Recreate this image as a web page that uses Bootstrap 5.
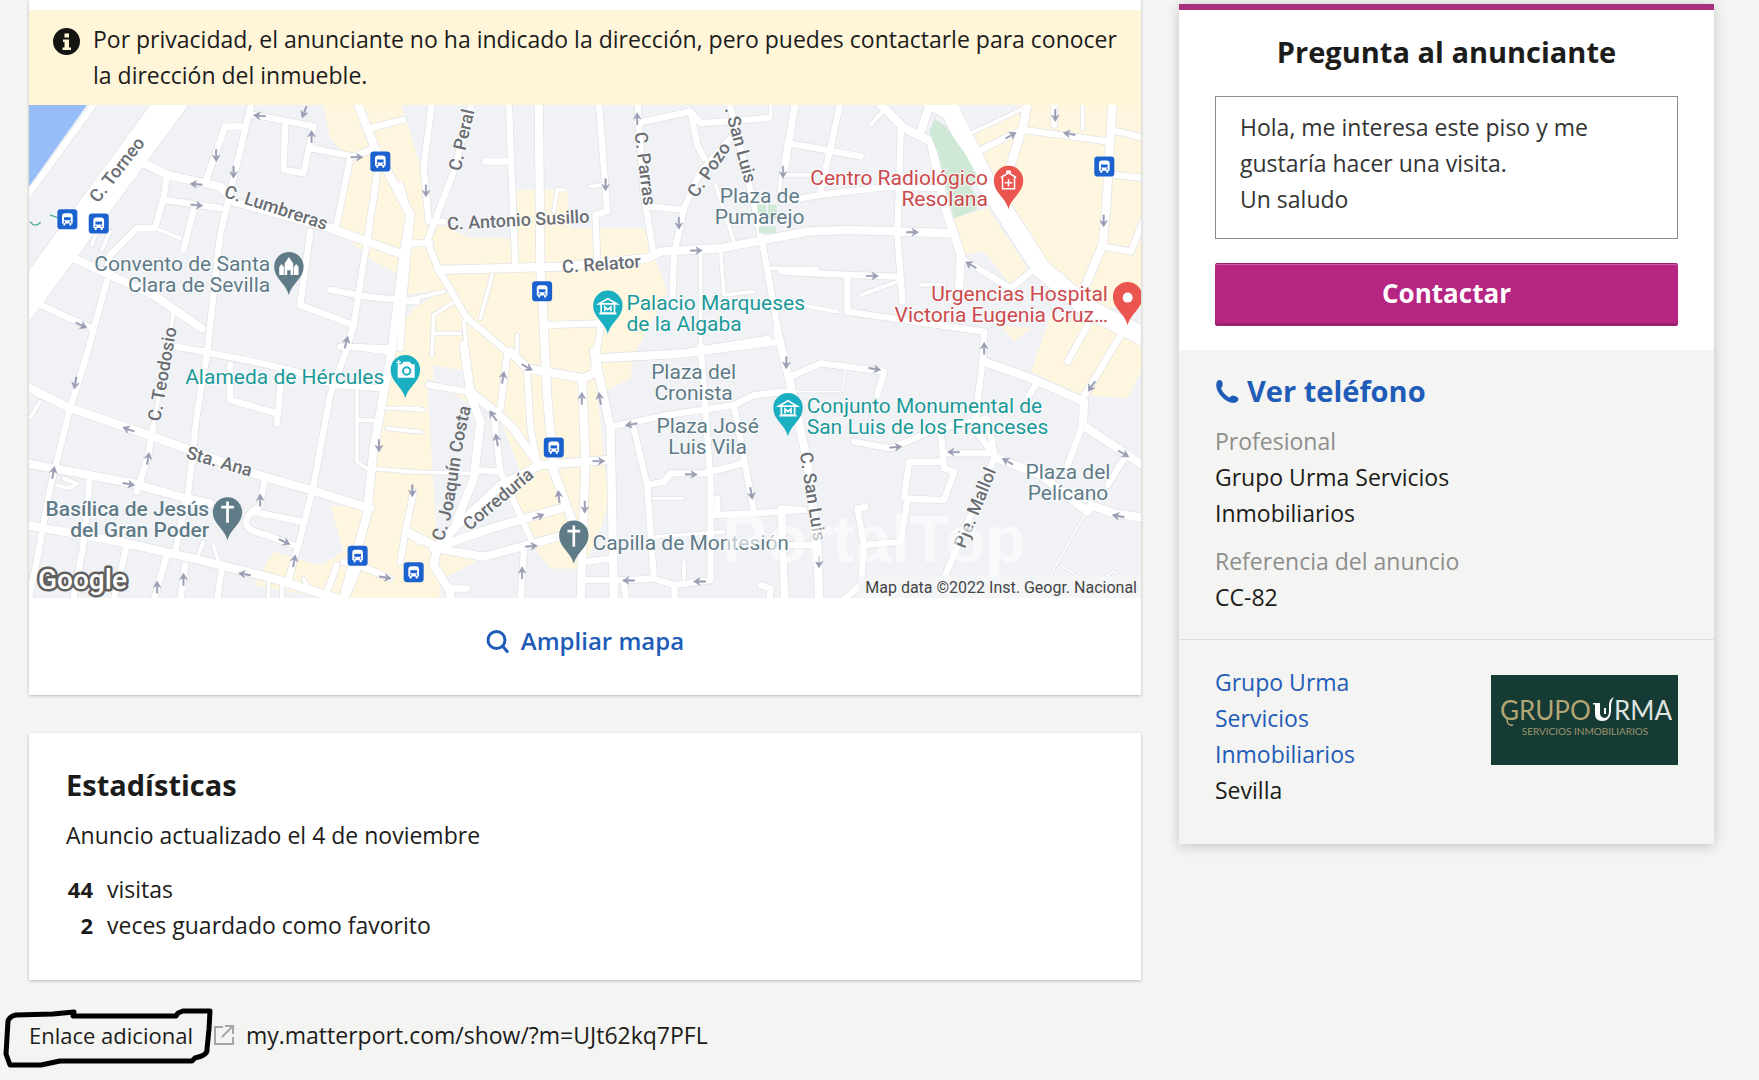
<!DOCTYPE html>
<html lang="es">
<head>
<meta charset="utf-8">
<meta name="viewport" content="width=device-width, initial-scale=1">
<title>Anuncio de piso en Sevilla</title>
<link rel="stylesheet" href="https://cdn.jsdelivr.net/npm/bootstrap@5.3.0/dist/css/bootstrap.min.css">
<style>
:root{--ink:#1c1c1a;--brand:#b72583;--azul:#1f5cb8;--page:#f4f4f2}
body{background:var(--page);color:var(--ink);font-family:"Open Sans","Noto Sans",sans-serif;font-size:23px;line-height:36px}
a{color:var(--azul);text-decoration:none}
.page-wrap{padding:0 45px 24px 29px}
.page-cols{gap:38px}
.main-col{flex:1 1 0;min-width:0}
.side-col{flex:0 1 535px}
.panel{background:#fff;box-shadow:0 1px 3px rgba(0,0,0,.25)}
.map-panel{padding-top:10px}
.notice{background:#fff6da;padding:11px 24px 12px;gap:13px}
.notice svg{flex:none;margin-top:7px}
.map-view{display:block;width:100%;height:493px}
.map-link{padding:25px 0 36px;font-size:24px;font-weight:600;gap:11px}
.stats{margin-top:38px;padding:34px 37px 37px}
.panel-title{font-size:29px;line-height:36px;font-weight:700;margin:0}
.stats p{margin:14px 0 18px}
.stat-num{width:27px;text-align:right;font-weight:700;font-size:22px}
.stats li{gap:14px}
.extra{margin-top:37px;gap:11px}
.extra-tag{margin-right:9px;font-size:22px}
.marker{left:-24px;top:-8px;width:208px;height:60px;overflow:visible;pointer-events:none}
.contact-box{margin-top:4px;box-shadow:0 2px 12px rgba(0,0,0,.2);background:var(--page)}
.ask{background:#fff;border-top:6px solid #a8307e;padding:24px 36px}
.ask textarea{height:143px;margin:26px 0 24px;padding:12px 24px;border:1px solid #8c8c8c;border-radius:0;font-size:23px;line-height:36px;color:#333;resize:none}
.btn-ask{height:63px;background:var(--brand);color:#fff;font-size:26px;font-weight:700;line-height:36px;border:0;border-radius:3px;padding:6px 8px 10px;box-shadow:inset 0 1px 0 #97206c,inset 0 2px 0 #cf5ba6,inset 0 -3px 0 #9c1f70}
.btn-ask:hover{background:#a31f74;color:#fff}
.who{padding:23px 36px 24px}
.phone{font-size:29px;font-weight:700;gap:8px}
.who dl{margin:14px 0 0}
.who dt{font-weight:400;color:#8e8e8c}
.who dd{margin:0 0 12px;max-width:260px}
.who dd:last-child{margin:0}
.agency{border-top:1px solid #dcdcda;padding:24px 36px 36px}
.agency-name{max-width:170px}
.agency svg{margin-top:11px}
/* map */
#net path{fill:none;stroke-linecap:round;stroke-linejoin:round}
.wa{stroke-width:calc(92px + var(--edge))}
.wv{stroke-width:calc(56px + var(--edge))}
.wb{stroke-width:calc(25px + var(--edge))}
.wc{stroke-width:calc(19px + var(--edge))}
.wd{stroke-width:calc(11px + var(--edge))}
.we{stroke-width:calc(5px + var(--edge))}
.road-case{--edge:4px;stroke:#dfe1e5}
.road-fill{--edge:0px;stroke:#fff}
.mlab{font-family:Roboto,sans-serif;font-size:21px}
.street{font-family:Roboto,sans-serif;font-size:18px;font-weight:500;fill:#6a6e73}
.curved{font:500 54px Roboto,sans-serif;fill:#6a6e73}
.slate{fill:#607b88}.teal{fill:#1b9999}.red{fill:#cb4a4c}
.mlab text,.street text{paint-order:stroke;stroke:#fff;stroke-opacity:.75;stroke-width:2px}
.attrib{font-family:Roboto,sans-serif;font-size:16px;fill:#454545}
.glogo{font-family:Roboto,sans-serif;font-size:28px;font-weight:500;fill:#fff;stroke:#606060;stroke-width:5px;paint-order:stroke;stroke-linejoin:round}
.wmark{font-family:"Liberation Sans",sans-serif;font-size:66px;font-weight:700;fill:#fff;opacity:.6}
@media (max-width:991px){.side-col{flex-basis:auto}}
</style>
</head>
<body>
<div class="page-wrap">
<div class="page-cols d-flex flex-column flex-lg-row align-items-start">
<main class="main-col">
<section class="panel map-panel">
 <div class="notice d-flex align-items-start">
  <svg width="27" height="27" viewBox="0 0 27 27" aria-hidden="true"><circle cx="13.500" cy="13.500" r="13.500" fill="#141412"/><path d="M11.500 5.500h4.500v4h-4.500zM10 11.500h6v8h2v2.500H9.500v-2.500h2v-5.500H10z" fill="#fff5d5"/></svg>
  <div>Por privacidad, el anunciante no ha indicado la dirección, pero puedes contactarle para conocer la dirección del inmueble.</div>
 </div>
 <svg class="map-view" viewBox="0 0 1111 493" preserveAspectRatio="xMidYMid slice" role="img" aria-label="Mapa de la zona">
 <defs>
  <path id="pin" d="M0 86C-8 50-44 38-44 0A44 44 0 1 1 44 0C44 38 8 50 0 86Z"/>
  <g id="bus"><rect x="-30" y="-30" width="60" height="60" rx="10" fill="#1c62cf"/><path d="M-16-9q0-9 9-9H7q9 0 9 9V13h-4v6H6v-6H-6v6h-6v-6h-4z" fill="#fff"/><path d="M-10-6H10V3H-10z" fill="#1c62cf"/><circle cx="-9" cy="8" r="2.500" fill="#1c62cf"/><circle cx="9" cy="8" r="2.500" fill="#1c62cf"/></g>
  <path id="arr" d="M-2-18H2V4L11-1 0 18-11-1-2 4Z" fill="#9a9db3" stroke="#9a9db3" stroke-width="2"/>
  <g id="museum" fill="none" stroke="#fff" stroke-width="5"><path d="M-27-7L0-23 27-7ZM-20-5V20H20V-5M-26 22H26M-9 15V2L0 10 9 2V15"/></g>
  <path id="cross" d="M0-29V35M-19-12H19" stroke="#fff" stroke-width="8" fill="none"/>
  <g id="net">
   <g>
    <path class="wa" d="M470 0L250 300L0 640"/>
    <path class="wc" d="M235 10L20 305"/>
    <path class="wc" d="M695 20L640 250L600 420L560 780L530 960L500 1230"/>
    <path class="wc" d="M560 250L615 95L660 95M700 60L880 95L850 235L790 225L795 90M870 160L1000 185L1050 165M990 190L945 410"/>
    <path class="wb" d="M380 210L440 240L600 275L640 320L930 400L1150 480"/>
    <path class="wc" d="M440 250L430 310L405 400L350 400L270 480L260 520M430 315L600 340M525 330L490 465"/>
    <path class="wd" d="M405 400L480 430M235 400L215 450M270 410L245 465"/>
    <path class="wb" d="M160 490L400 600L545 700M1010 20L1060 150L1170 360L1150 480L1130 640L1115 760L1060 1060L1040 1260L1000 1400L960 1540"/>
    <path class="wc" d="M40 620L215 700M260 560L200 780L150 940L90 1180L50 1400L25 1520M870 410L840 630L1000 690L980 760L930 900L880 1170L840 1330L800 1470"/>
    <path class="wc" d="M1050 100L1150 75M1070 240L1040 440L1000 690M930 585L1040 605L1190 620"/>
    <path class="wd" d="M460 650L450 720L395 1020M465 760L560 765M975 755L1110 775"/>
   </g>
   <g transform="translate(0 750)">
    <path class="wb" d="M20 125L140 185L400 275L700 385L870 435L1050 490M20 355L340 415L480 455L570 475M20 540L300 590L520 640L760 700L950 760"/>
    <path class="wc" d="M470 5L700 50L830 80L940 120L1090 130M630 60L630 165L770 205M785 80L770 235M400 240L385 330L350 440M735 395L720 480L700 500L850 530M700 495Q640 550 740 570L820 600M210 390L190 600L160 760M500 460L465 620M440 630L400 770M320 600L280 770M495 660L480 770M605 670L590 770M960 5L1120 10"/>
    <path class="wd" d="M130 400L170 415L150 430L110 420M550 590L530 640M580 600L595 650M1010 140L1010 350L1040 370L1190 380M1010 225L1060 225M1100 190L1200 190M1100 250L1200 260M60 170L30 220M745 705V770M785 715V770M850 700L870 740"/>
    <path class="wc" d="M970 650L1040 670L1110 700M950 660L920 740M1180 440L1155 560L1200 590M1155 560L1140 650M1010 680L970 770"/>
   </g>
   <g transform="translate(1140 0)">
    <path class="wc" d="M95 20L70 220L85 380L130 380M215 20L160 230L80 440L115 525L200 670L320 770M255 200H325M325 20L345 520M595 20L620 350L585 360L590 490M710 20L730 300L760 480"/>
    <path class="wb" d="M415 20L420 530L425 600L440 900L460 1130L520 1290"/>
    <path class="wb" d="M115 525L480 515L740 490L780 470L960 460L1220 410L1340 405L1650 415"/>
    <path class="wc" d="M0 270L30 380L10 600L0 760M30 445H90M710 85L870 50L900 85L980 80L1100 70M870 50L890 150L910 190M990 130L900 230L850 340L820 480L815 620M750 335L850 345M985 20L1060 330L1090 470L1140 750"/>
    <path class="wd" d="M1180 20L1150 190L1135 290M1160 145L1200 155M1140 240H1240M275 540L240 670M0 620L130 590M155 625L100 660L95 780M105 715H180M190 680L200 770M350 720V770M900 470V760M960 470L970 600L1060 590M945 270L1000 440M1110 20V70M1100 520H1250M570 275L600 270M460 350L470 285L490 285"/>
    <path class="wc" d="M440 690L600 685M600 700L580 820M590 790L820 780L1140 740"/>
   </g>
   <g transform="translate(2280 0)">
    <path class="wv" d="M440 10L510 50L620 270L780 520L920 640L1100 730"/>
    <path class="wb" d="M300 30L370 100L450 140L490 330L540 480L535 580M440 50L420 110M740 20L730 80L690 210M995 20L975 350L965 450L915 570"/>
    <path class="wc" d="M45 20L10 240M180 20L120 290M0 320L120 300L330 275L480 280M360 100L350 420L365 620M20 145L240 185M1 530L200 540L350 545M200 545V650L400 680L610 710M600 165L725 105L980 140M820 30V90M1010 110L1090 130M1000 240L1090 250M970 455L1050 470L1090 370M540 490L690 580L750 530M610 710L605 800L580 1000L640 1080M920 690L860 800M1020 720L900 920"/>
    <path class="wd" d="M270 90L310 45M560 120L720 45M905 30V100M0 620L170 650M240 600L350 560M420 570H490M530 20V60"/>
   </g>
   <g transform="translate(1140 750)">
    <path class="wb" d="M190 0L210 140L260 180L330 240L410 350M210 150L240 230L220 400L160 550L110 610L250 635L380 600L490 570M100 610L270 550L480 490M20 560L100 600M110 610L100 660L150 740L150 780M120 590L300 420L420 360L620 345"/>
    <path class="wb" d="M330 20L380 70L550 100L590 80L590 40L850 25L1100 -15M580 20L630 250L635 500L640 770M545 100L555 350L540 780"/>
    <path class="wc" d="M85 120L200 140M380 80L390 250L410 350M320 30L300 190L280 210L300 380L400 600M230 375L300 380M370 620L360 770M630 245L800 210L1000 180L1060 150L1160 140M700 250L740 420L760 700L820 720L930 705V410L900 0M740 420L790 410L810 385L910 385L1030 355M1000 180L1060 500M930 510L1060 505L1200 495M950 460V500M540 705H690L750 700M670 710L680 780M820 720L825 780M1140 510L1155 770M555 650L630 640M150 730H200M1080 720L1110 730L1105 770"/>
    <path class="wd" d="M760 460H845M760 575L970 560M850 650V700M0 190L70 195M0 255L60 260M0 380L220 385"/>
   </g>
   <g transform="translate(2280 750)">
    <path class="wb" d="M-10 -40L30 120L80 350L110 600L115 770M610 50L750 100L910 170L905 240L1100 370M650 340L780 390L920 500L930 480L1000 505L1100 520"/>
    <path class="wc" d="M30 95L120 55L310 80L290 150M220 290L330 310L470 250L620 220L640 325L490 325M480 270L490 370L520 380L490 465L370 460L385 350L490 350M380 465L360 590L250 600L230 490L255 485M250 600L240 720L180 770M0 490L70 495M0 600L100 600M5 490L10 770M640 340L490 700M770 110L740 160M905 240L860 360M1030 340L980 420"/>
    <path class="we" d="M195 70L185 140H40M910 510L810 690M840 660L900 700M960 700L1000 680L1040 710"/>
   </g>
  </g>
  <path id="jc" d="M128 590Q158 510 172 400T212 185"/>
 </defs>
 <g transform="translate(-9 -10) scale(.33333)">
  <rect x="20" y="20" width="3360" height="1500" fill="#f0f2f5"/>
  <path fill="#97bdf9" d="M20 20H208L20 285Z"/>
  <g fill="#fef6de">
   <path d="M905 20H1140L1205 230 1225 370 1350 430H1480V285H1640L1650 400 1870 400 1940 590 1840 780 1830 850 1730 900 1765 1220 1740 1300 1690 1420 1590 1420 1520 1330 1430 1130 1340 920 1220 850 1250 1350 1400 1380 1270 1450 1250 1520H980L700 1470 760 1370 900 1410 970 1370 930 1230 1050 1240 1110 760 1140 540 1060 500 945 400 985 190 930 130Z"/>
   <path d="M2840 130L3020 20H3380V640L3180 640 3060 500ZM2800 370L2900 340 3020 520 2970 570 2890 470 2820 480ZM3090 660L3360 720V830L3320 910 3180 900 3030 830ZM2940 690L3030 700 2980 740Z"/>
  </g>
  <path fill="#f0f2f5" d="M1140 600L1270 585 1180 640 1140 690ZM1240 810L1345 830V890H1235ZM1370 930L1440 970 1500 1130 1420 1330 1340 1330Z"/>
  <g><use href="#net" class="road-case"/><use href="#net" class="road-fill"/></g>
  <path fill="#cfe9d6" d="M2725 110L2742 72 2775 95 2835 180 2870 245 2850 280 2870 310 2868 345 2800 370 2780 290 2756 190ZM2210 330h26v26h-26zM2242 330h26v40h-26zM2215 395h50v20h-50z"/>
  <path d="M30 380q15 20 32 2M90 360l22 8" fill="none" stroke="#4fae92" stroke-width="4"/>
  <g>
   <use href="#arr" transform="translate(588 182)"/><use href="#arr" transform="translate(640 232)"/><use href="#arr" transform="translate(852 52) rotate(20)"/><use href="#arr" transform="translate(718 63) rotate(95)"/><use href="#arr" transform="translate(874 125) rotate(180)"/><use href="#arr" transform="translate(1010 187) rotate(-90)"/><use href="#arr" transform="translate(528 268) rotate(95)"/><use href="#arr" transform="translate(530 331) rotate(-85)"/><use href="#arr" transform="translate(184 691) rotate(-65)"/><use href="#arr" transform="translate(978 742) rotate(195)"/>
   <use href="#arr" transform="translate(1217 288)"/><use href="#arr" transform="translate(1755 270)"/><use href="#arr" transform="translate(1850 72) rotate(180)"/><use href="#arr" transform="translate(1975 385)"/><use href="#arr" transform="translate(2027 467) rotate(-90)"/><use href="#arr" transform="translate(2287 232)"/>
   <use href="#arr" transform="translate(3103 62)"/><use href="#arr" transform="translate(3145 117) rotate(100)"/><use href="#arr" transform="translate(2970 122) rotate(-120)"/><use href="#arr" transform="translate(2675 412) rotate(-90)"/><use href="#arr" transform="translate(2555 543) rotate(-90)"/><use href="#arr" transform="translate(2850 510) rotate(120)"/><use href="#arr" transform="translate(3248 378)"/><use href="#arr" transform="translate(2890 760) rotate(180)"/>
   <use href="#arr" transform="translate(166 864) rotate(10)"/><use href="#arr" transform="translate(325 1003) rotate(110)"/><use href="#arr" transform="translate(384 1090) rotate(190)"/><use href="#arr" transform="translate(100 1132) rotate(190)"/><use href="#arr" transform="translate(326 1167) rotate(-80)"/><use href="#arr" transform="translate(720 1215) rotate(180)"/><use href="#arr" transform="translate(793 1340) rotate(-65)"/><use href="#arr" transform="translate(822 1397) rotate(190)"/><use href="#arr" transform="translate(673 1437) rotate(100)"/><use href="#arr" transform="translate(490 1452) rotate(180)"/><use href="#arr" transform="translate(411 1476) rotate(180)"/><use href="#arr" transform="translate(1076 1052)"/><use href="#arr" transform="translate(1176 1187)"/><use href="#arr" transform="translate(1095 1447) rotate(-80)"/>
   <use href="#arr" transform="translate(1520 817) rotate(-60)"/><use href="#arr" transform="translate(1448 847) rotate(190)"/><use href="#arr" transform="translate(1684 910) rotate(180)"/><use href="#arr" transform="translate(1738 910) rotate(170)"/><use href="#arr" transform="translate(1418 962) rotate(145)"/><use href="#arr" transform="translate(1429 1034) rotate(170)"/><use href="#arr" transform="translate(1735 1098) rotate(-90)"/><use href="#arr" transform="translate(1615 1204) rotate(175)"/><use href="#arr" transform="translate(1693 1236)"/><use href="#arr" transform="translate(1554 1264) rotate(-110)"/><use href="#arr" transform="translate(1533 1353) rotate(-95)"/><use href="#arr" transform="translate(1505 1433) rotate(180)"/><use href="#arr" transform="translate(1832 988) rotate(80)"/><use href="#arr" transform="translate(2012 1138) rotate(-90)"/><use href="#arr" transform="translate(2192 1195) rotate(-10)"/><use href="#arr" transform="translate(1824 1456) rotate(90)"/><use href="#arr" transform="translate(2037 1459) rotate(90)"/>
   <use href="#arr" transform="translate(2297 803)"/><use href="#arr" transform="translate(2562 822) rotate(-80)"/><use href="#arr" transform="translate(2625 1056) rotate(-95)"/><use href="#arr" transform="translate(2798 1071) rotate(90)"/><use href="#arr" transform="translate(2960 1099) rotate(120)"/><use href="#arr" transform="translate(3212 874) rotate(35)"/><use href="#arr" transform="translate(3308 1076) rotate(-60)"/><use href="#arr" transform="translate(3292 1263) rotate(100)"/><use href="#arr" transform="translate(2395 1400)"/>
  </g>
  <use href="#bus" x="142" y="373"/><use href="#bus" x="236" y="386"/><use href="#bus" x="1080" y="200"/><use href="#bus" x="1565" y="589"/><use href="#bus" x="3250" y="215"/><use href="#bus" x="1012" y="1382"/><use href="#bus" x="1180" y="1431"/><use href="#bus" x="1600" y="1057"/>
  <g fill="#607b88"><use href="#pin" x="806" y="515"/><use href="#pin" x="622" y="1250"/><use href="#pin" x="1660" y="1320"/></g>
  <g fill="#1ab0c2"><use href="#pin" x="1762" y="631"/><use href="#pin" x="1155" y="824"/><use href="#pin" x="2302" y="938"/></g>
  <g fill="#ea5550"><use href="#pin" x="2963" y="257"/><use href="#pin" x="3320" y="605"/></g>
  <path d="M777 540V516l7-9 7 9v24zM793 540V506l13-20 13 20v34h-8v-14h-10v14zM821 540V516l7-9 7 9v24z" fill="#fff"/>
  <use href="#cross" x="622" y="1248"/><use href="#cross" x="1660" y="1320"/>
  <use href="#museum" x="1762" y="634"/><use href="#museum" x="2302" y="940"/>
  <path d="M1132 808h12l6-8h18l6 8h9v40h-51z" fill="#fff"/><circle cx="1159" cy="828" r="11" fill="none" stroke="#1ab0c2" stroke-width="6"/><path d="M1135 795v14M1128 802h14" stroke="#fff" stroke-width="4"/>
  <path d="M2940 248L2963 234 2986 248M2945 247V282H2981V247M2963 253V275M2952 264H2974M2958 235V229H2968V235" fill="none" stroke="#fff" stroke-width="4.500"/>
  <circle cx="3320" cy="608" r="15" fill="#fff"/>
  <g transform="translate(1140 750)"><text class="curved"><textPath href="#jc">C. Joaquín Costa</textPath></text></g>
 </g>
 <g class="street">
  <text transform="translate(69 99) rotate(-52)">C. Torneo</text>
  <text transform="translate(194 92) rotate(18)">C. Lumbreras</text>
  <text transform="translate(131 317) rotate(-80)">C. Teodosio</text>
  <text transform="translate(431 67) rotate(-77)">C. Peral</text>
  <text transform="translate(418 125) rotate(-3)">C. Antonio Susillo</text>
  <text transform="translate(533 168) rotate(-4)">C. Relator</text>
  <text transform="translate(605 28) rotate(83)">C. Parras</text>
  <text transform="translate(667 94) rotate(-56)">C. Pozo</text>
  <text transform="translate(695 4) rotate(75)">. San Luis</text>
  <text transform="translate(156 353) rotate(16)">Sta. Ana</text>
  <text transform="translate(440 426) rotate(-40)">Correduría</text>
  <text transform="translate(770 348) rotate(81)">C. San Luis</text>
  <text transform="translate(935 444) rotate(-68)">Pje. Mallol</text>
 </g>
 <g class="mlab slate">
  <g text-anchor="end"><text x="241" y="166">Convento de Santa</text><text x="241" y="187">Clara de Sevilla</text>
  <text x="180" y="411" font-weight="500">Basílica de Jesús</text><text x="180" y="432" font-weight="500">del Gran Poder</text></g>
  <g text-anchor="middle"><text x="730" y="98">Plaza de</text><text x="730" y="119">Pumarejo</text>
  <text x="664" y="274">Plaza del</text><text x="664" y="295">Cronista</text>
  <text x="678" y="328">Plaza José</text><text x="678" y="349">Luis Vila</text>
  <text x="1038" y="374">Plaza del</text><text x="1038" y="395">Pelícano</text></g>
  <text x="563" y="445">Capilla de Montesión</text>
 </g>
 <g class="mlab teal">
  <text x="355" y="279" text-anchor="end">Alameda de Hércules</text>
  <text x="597" y="205">Palacio Marqueses</text><text x="597" y="226">de la Algaba</text>
  <text x="777" y="308">Conjunto Monumental de</text><text x="777" y="329">San Luis de los Franceses</text>
 </g>
 <g class="mlab red" text-anchor="end">
  <text x="958" y="80">Centro Radiológico</text><text x="958" y="101">Resolana</text>
  <text x="1078" y="196">Urgencias Hospital</text><text x="1078" y="217">Victoria Eugenia Cruz…</text>
 </g>
 <text class="wmark" x="693" y="457">PortalTop</text>
 <rect x="828" y="471" width="283" height="22" fill="#f5f6f7" opacity=".85"/>
 <text class="attrib" x="1107" y="488" text-anchor="end">Map data ©2022 Inst. Geogr. Nacional</text>
 <text class="glogo" x="9" y="484">Google</text>
 </svg>
 <a href="#" class="map-link d-flex justify-content-center align-items-center">
  <svg width="24" height="24" viewBox="0 0 24 24" aria-hidden="true" fill="none" stroke="#1f5cb8" stroke-width="3"><circle cx="10.500" cy="11" r="8.500"/><path d="M16.500 17L22 23.500"/></svg>Ampliar mapa</a>
</section>
<section class="panel stats">
 <h2 class="panel-title">Estadísticas</h2>
 <p>Anuncio actualizado el 4 de noviembre</p>
 <ul class="list-unstyled mb-0">
  <li class="d-flex"><span class="stat-num">44</span><span>visitas</span></li>
  <li class="d-flex"><span class="stat-num">2</span><span>veces guardado como favorito</span></li>
 </ul>
</section>
<div class="extra d-flex align-items-center">
 <div class="extra-tag position-relative">Enlace adicional
  <svg class="marker position-absolute" viewBox="0 0 208 60" fill="none" stroke="#000" stroke-width="5" stroke-linejoin="round" stroke-linecap="round" aria-hidden="true"><path d="M3 12Q5 7 11 6L48 5 69 3 68 7H171L173 4 178 2H205L204 20 202 40Q203 46 190 49L187 52H55L36 56H5L1 45Z"/></svg></div>
 <svg width="22" height="22" viewBox="0 0 22 22" aria-hidden="true" fill="none" stroke="#a6a6a4" stroke-width="2"><path d="M10 3H2V20H20V13M12 2H20V10M20 2L9 13"/></svg>
 <a href="#" class="text-reset">my.matterport.com/show/?m=UJt62kq7PFL</a>
</div>
</main>
<aside class="side-col">
<div class="contact-box">
 <form class="ask">
  <h2 class="panel-title text-center"><label for="msg">Pregunta al anunciante</label></h2>
  <textarea id="msg" class="form-control" rows="3">Hola, me interesa este piso y me gustaría hacer una visita.
Un saludo</textarea>
  <button type="button" class="btn btn-ask w-100">Contactar</button>
 </form>
 <div class="who">
  <a href="#" class="phone d-flex align-items-center"><svg width="24" height="26" viewBox="0 0 24 26" aria-hidden="true" fill="#1f5cb8"><path d="M1.500 4.500Q3 1 6.500 2.500Q8 4 7.500 8Q6.500 10 6 10Q8 16 14.500 19.500Q16 17.500 18 17.500Q22 18 23.500 20.500Q23.500 24 19 25Q12 25 6 18Q0 11 1.500 4.500Z"/></svg>Ver teléfono</a>
  <dl><dt>Profesional</dt><dd>Grupo Urma Servicios Inmobiliarios</dd><dt>Referencia del anuncio</dt><dd>CC-82</dd></dl>
 </div>
 <div class="agency d-flex justify-content-between align-items-start">
  <div class="agency-name"><a href="#">Grupo Urma Servicios Inmobiliarios</a><br>Sevilla</div>
  <svg width="187" height="90" viewBox="0 0 187 90" role="img" aria-label="Grupo Urma"><rect width="187" height="90" fill="#163a34"/>
   <g font-family="Lato,sans-serif" font-size="26"><text x="9" y="45" fill="#b3a675">GRUPO</text><text x="123" y="45" fill="#dfe3df">RMA</text></g>
   <path d="M16 44Q16 51 22 50" fill="none" stroke="#b3a675" stroke-width="1.500"/>
   <path d="M102 28H109V39Q110 43 114 43Q118 42 118 36V30Q118 24 123 22Q120 26 120 32V37Q119 46 111 46Q104 46 104 39V29.500H102Z" fill="#fff"/><path d="M114 33V39" stroke="#fff" stroke-width="2"/>
   <text x="94" y="60" text-anchor="middle" font-family="Lato,sans-serif" font-size="10" fill="#9d9670">SERVICIOS INMOBILIARIOS</text></svg>
 </div>
</div>
</aside>
</div>
</div>
<script src="https://cdn.jsdelivr.net/npm/bootstrap@5.3.0/dist/js/bootstrap.bundle.min.js"></script>
</body>
</html>
